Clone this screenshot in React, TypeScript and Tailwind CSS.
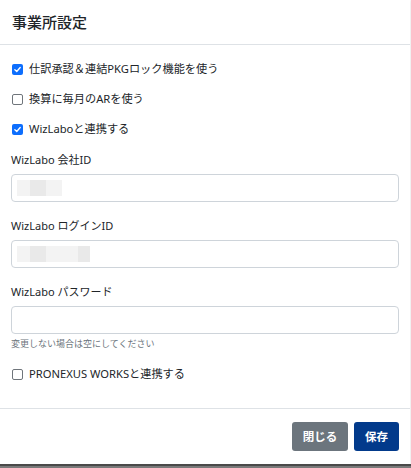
import React from "react";

const font = { fontFamily: '"Noto Sans", "Noto Sans CJK JP", sans-serif' };

function Check({ checked }: { checked?: boolean }) {
	if (checked) {
		return (
			<span className="flex h-[11px] w-[11px] shrink-0 items-center justify-center rounded-[2px] bg-[#0d6efd]">
				<svg viewBox="0 0 12 12" className="h-[9px] w-[9px]">
					<path d="M2.5 6.3 L5 8.6 L9.6 3.4" fill="none" stroke="#fff" strokeWidth="1.8" strokeLinecap="round" strokeLinejoin="round" />
				</svg>
			</span>
		);
	}
	return <span className="h-[11px] w-[11px] shrink-0 rounded-[2px] border border-[#6f757b] bg-white" />;
}

function CheckRow({ checked, label, className }: { checked?: boolean; label: string; className?: string }) {
	return (
		<div className={"flex h-[18px] items-center gap-[6px] pl-[1px] " + (className ?? "")}>
			<Check checked={checked} />
			<span className="text-[11.2px] leading-[18px] text-[#212529]">{label}</span>
		</div>
	);
}

function Field({ label, blur, className }: { label: string; blur?: number[]; className?: string }) {
	return (
		<div className={className}>
			<div className="h-[16px] text-[11px] leading-[16px] text-[#212529]">{label}</div>
			<div className="mt-[6px] flex h-[28px] items-center rounded-[4px] border border-[#ced4da] bg-white px-[5px]">
				{blur && (
					<div className="flex h-[16px]">
						{blur.map((w, i) => (
							<div key={i} className={i % 2 === 1 ? "h-full bg-[#e9e9e9]" : "h-full bg-[#f3f3f3]"} style={{ width: w }} />
						))}
					</div>
				)}
			</div>
		</div>
	);
}

export default function App() {
	return (
		<div className="flex h-[468px] w-[411px] flex-col overflow-hidden bg-white" style={font}>
			<div className="w-[410px] bg-white shadow-[0_0_3px_rgba(0,0,0,0.15)]">
				<div className="flex h-[45px] items-center border-b border-[#dee2e6] px-[12px]">
					<h5 className="text-[15px] font-medium text-[#212529]">事業所設定</h5>
				</div>
				<div className="px-[11px] pb-[25px] pt-[15px]">
					<CheckRow checked label="仕訳承認＆連結PKGロック機能を使う" />
					<CheckRow label="換算に毎月のARを使う" className="mt-[12px]" />
					<CheckRow checked label="WizLaboと連携する" className="mt-[12px]" />
					<Field label="WizLabo 会社ID" blur={[13, 16, 16]} className="mt-[14px]" />
					<Field label="WizLabo ログインID" blur={[13, 16, 32, 12]} className="mt-[16px]" />
					<Field label="WizLabo パスワード" className="mt-[16px]" />
					<div className="mt-[4px] h-[12px] text-[9px] leading-[12px] text-[#6c757d]">変更しない場合は空にしてください</div>
					<CheckRow label="PRONEXUS WORKSと連携する" className="mt-[15px]" />
				</div>
				<div className="flex justify-end gap-[6px] border-t border-[#dee2e6] px-[11px] pb-[13px] pt-[13px]">
					<button className="h-[29px] w-[56px] rounded-[3px] bg-[#6c757d] text-[11.5px] font-semibold text-white">閉じる</button>
					<button className="h-[29px] w-[45px] rounded-[3px] bg-[#023a8b] text-[11.5px] font-semibold text-white">保存</button>
				</div>
			</div>
			<div className="flex-1 border-t-2 border-[#4a4a4a] bg-[#7a7a7a] pl-[14px] text-[10px] leading-[8px] text-[#222]">ｖ・ｖ・ｖ</div>
		</div>
	);
}
